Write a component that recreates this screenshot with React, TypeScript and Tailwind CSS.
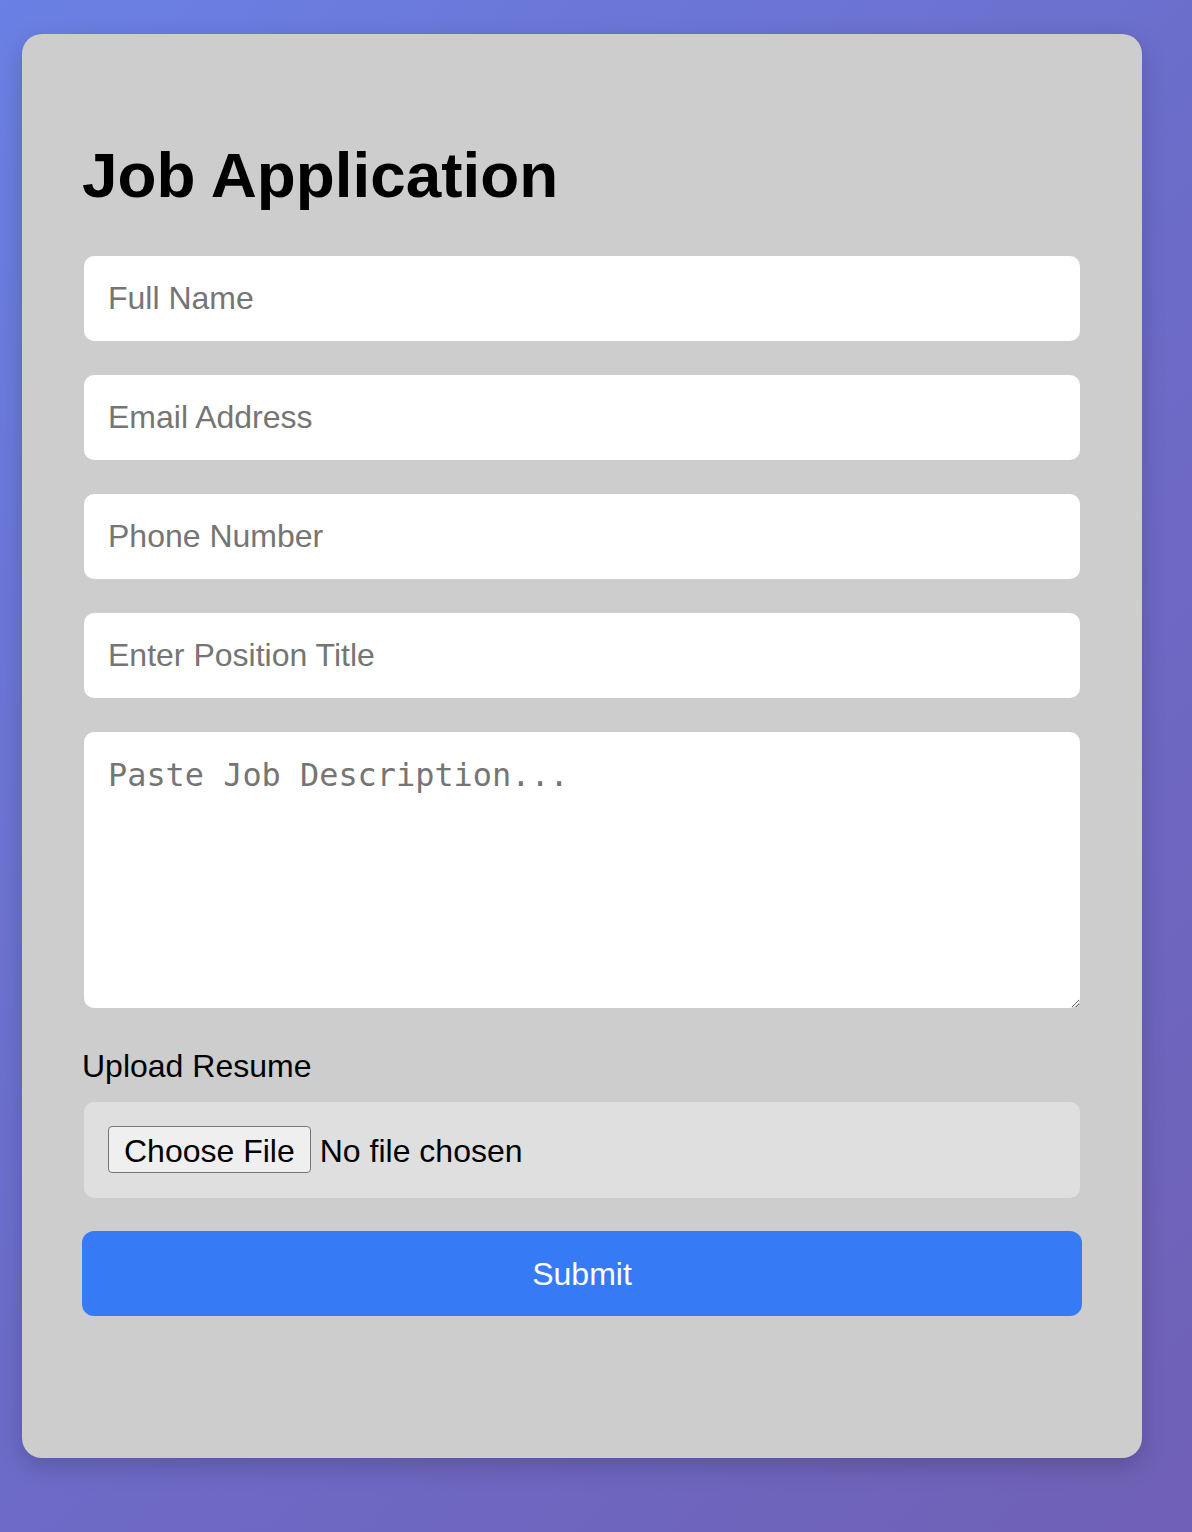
import React from "react";

const fieldClass =
  "block w-full h-[89px] rounded-[12px] border-2 border-[#cdcdcd] bg-white px-[24px] text-[32px] text-black placeholder:text-[#757575] outline-none";

const textFields = [
  { type: "text", placeholder: "Full Name" },
  { type: "email", placeholder: "Email Address" },
  { type: "tel", placeholder: "Phone Number" },
  { type: "text", placeholder: "Enter Position Title" },
];

export default function App() {
  return (
    <div className="min-h-screen w-full overflow-hidden bg-[linear-gradient(135deg,#6a80e4_0%,#6c6cc9_50%,#7060b6_100%)] pt-[34px] pb-[74px] font-['Liberation_Sans',Arial,sans-serif]">
      <div className="ml-[22px] w-[1120px] rounded-[20px] bg-[#cdcdcd] px-[60px] pt-[105px] pb-[142px] shadow-[0_8px_24px_rgba(0,0,0,0.18)]">
        <h1 className="text-[63.8px] font-bold leading-[72px] text-black">Job Application</h1>

        <form className="mt-[43px] flex flex-col" onSubmit={(e) => e.preventDefault()}>
          <div className="flex flex-col gap-[30px]">
            {textFields.map((f) => (
              <input key={f.placeholder} type={f.type} placeholder={f.placeholder} className={fieldClass} />
            ))}
            <textarea
              placeholder="Paste Job Description..."
              className="block w-full h-[280px] rounded-[12px] border-2 border-[#cdcdcd] bg-white px-[24px] pt-[20px] font-['DejaVu_Sans_Mono',monospace] text-[31.9px] text-black placeholder:text-[#757575] outline-none"
            />
          </div>

          <label className="mt-[38px] block text-[32px] leading-[36px] text-black">Upload Resume</label>
          <input
            type="file"
            className="mt-[16px] block w-full h-[100px] rounded-[12px] border-2 border-[#cdcdcd] bg-[#dfdfdf] px-[24px] py-[24px] text-[32px] leading-[48px] text-black file:mr-[9px] file:h-[47px] file:rounded-[4px] file:border file:border-solid file:border-[#767676] file:bg-[#efefef] file:px-[15px] file:text-[32px] file:text-black"
          />

          <button
            type="submit"
            className="mt-[31px] h-[85px] w-full rounded-[12px] bg-[#367bf5] text-[32px] text-white"
          >
            Submit
          </button>
        </form>
      </div>
    </div>
  );
}
